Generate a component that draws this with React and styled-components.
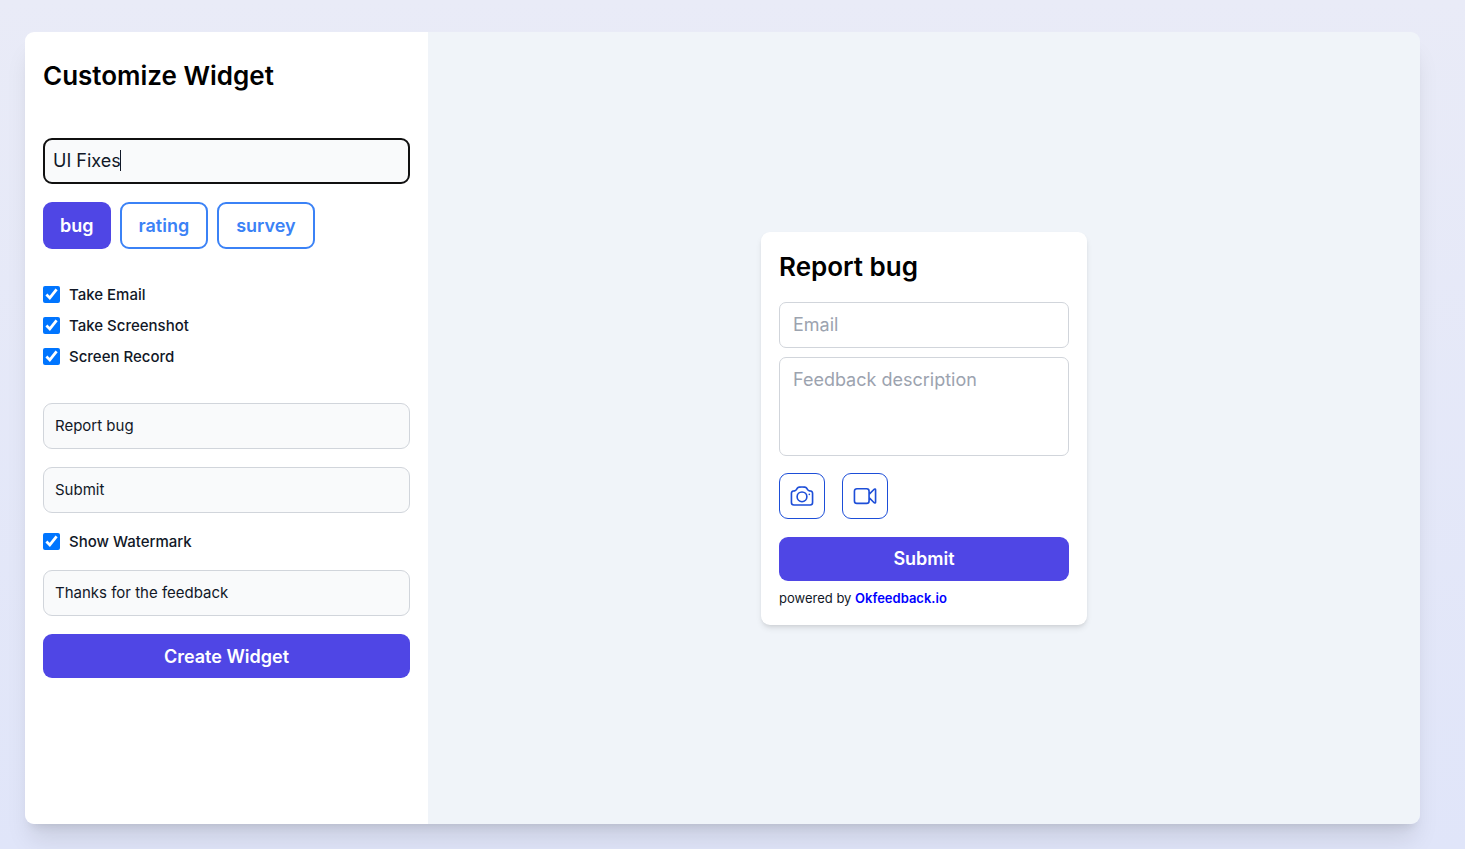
import { useLayoutEffect, useRef, useState } from "react";
import styled, { createGlobalStyle } from "styled-components";
import { HiOutlineCamera, HiOutlineVideoCamera } from "react-icons/hi2";

const widgetTypes = ["bug", "rating", "survey"];

export default function App() {
  const [name, setName] = useState("UI Fixes");
  const [type, setType] = useState("bug");
  const [title, setTitle] = useState("Report bug");
  const [submitText, setSubmitText] = useState("Submit");
  const [thanksText, setThanksText] = useState("Thanks for the feedback");
  const [takeEmail, setTakeEmail] = useState(true);
  const [takeScreenshot, setTakeScreenshot] = useState(true);
  const [screenRecord, setScreenRecord] = useState(true);
  const [watermark, setWatermark] = useState(true);

  return (
    <Page>
      <GlobalStyle />
      <Builder>
        <Sidebar>
          <PageTitle>Customize Widget</PageTitle>
          <NameField value={name} onChange={setName} />
          <TypeList>
            {widgetTypes.map((item) => (
              <TypeButton
                key={item}
                type="button"
                $active={item === type}
                onClick={() => setType(item)}
              >
                {item}
              </TypeButton>
            ))}
          </TypeList>
          <Options>
            <Check label="Take Email" checked={takeEmail} onChange={setTakeEmail} />
            <Check
              label="Take Screenshot"
              checked={takeScreenshot}
              onChange={setTakeScreenshot}
            />
            <Check
              label="Screen Record"
              checked={screenRecord}
              onChange={setScreenRecord}
            />
          </Options>
          <TextInput
            aria-label="Widget title"
            value={title}
            onChange={(e) => setTitle(e.target.value)}
          />
          <TextInput
            aria-label="Submit button text"
            value={submitText}
            onChange={(e) => setSubmitText(e.target.value)}
          />
          <Check label="Show Watermark" checked={watermark} onChange={setWatermark} />
          <TextInput
            aria-label="Thank you message"
            value={thanksText}
            onChange={(e) => setThanksText(e.target.value)}
          />
          <PrimaryButton type="button">Create Widget</PrimaryButton>
        </Sidebar>

        <Preview>
          <Widget>
            <WidgetTitle>{title}</WidgetTitle>
            {takeEmail && (
              <EmailInput type="email" aria-label="Email" placeholder="Email" />
            )}
            <Description
              aria-label="Feedback description"
              placeholder="Feedback description"
            />
            <Actions>
              {takeScreenshot && (
                <IconButton type="button" aria-label="Take screenshot">
                  <HiOutlineCamera />
                </IconButton>
              )}
              {screenRecord && (
                <IconButton type="button" aria-label="Record screen">
                  <HiOutlineVideoCamera />
                </IconButton>
              )}
            </Actions>
            <PrimaryButton type="button">{submitText}</PrimaryButton>
            {watermark && (
              <Watermark>
                powered by <a href="#okfeedback">Okfeedback.io</a>
              </Watermark>
            )}
          </Widget>
        </Preview>
      </Builder>
    </Page>
  );
}

function NameField({ value, onChange }) {
  const inputRef = useRef(null);
  const [caretLeft, setCaretLeft] = useState(0);
  const [caretIndex, setCaretIndex] = useState(value.length);

  // the caret sits after the text before the selection
  useLayoutEffect(() => {
    const style = getComputedStyle(inputRef.current);
    const context = document.createElement("canvas").getContext("2d");
    context.font = `${style.fontSize} ${style.fontFamily}`;
    const textWidth = context.measureText(value.slice(0, caretIndex)).width;
    setCaretLeft(Math.floor(10 + textWidth));
  }, [value, caretIndex]);

  return (
    <NameWrapper>
      <NameInput
        ref={inputRef}
        aria-label="Widget name"
        autoFocus
        value={value}
        onChange={(e) => {
          onChange(e.target.value);
          setCaretIndex(e.target.selectionStart);
        }}
        onSelect={(e) => setCaretIndex(e.target.selectionStart)}
      />
      <Caret style={{ left: caretLeft }} />
    </NameWrapper>
  );
}

function Check({ label, checked, onChange }) {
  return (
    <CheckLabel>
      <input
        type="checkbox"
        checked={checked}
        onChange={(e) => onChange(e.target.checked)}
      />
      {label}
    </CheckLabel>
  );
}

const GlobalStyle = createGlobalStyle`
  * {
    box-sizing: border-box;
  }

  body {
    margin: 0;
    color: #111827;
    font-family: Inter, "Liberation Sans", sans-serif;
  }

  button,
  input,
  textarea {
    margin: 0;
    font-family: inherit;
  }

  button {
    cursor: pointer;
  }
`;

const Page = styled.div`
  min-height: 100vh;
  padding: 32px 45px 25px 25px;
  display: flex;
  background: linear-gradient(#e9ebf7, #e0e5f9);
`;

const Builder = styled.main`
  flex: 1;
  display: flex;
  border-radius: 9px;
  box-shadow: 0 20px 25px -5px rgba(0, 0, 0, 0.1),
    0 8px 10px -6px rgba(0, 0, 0, 0.1);
`;

const Sidebar = styled.section`
  width: 403px;
  flex-shrink: 0;
  padding: 26px 18px 18px;
  display: flex;
  flex-direction: column;
  gap: 18px;
  background-color: #fff;
  border-radius: 9px 0 0 9px;
`;

const PageTitle = styled.h1`
  margin: 0 0 26px;
  color: #000;
  font-size: 26px;
  font-weight: 600;
  line-height: 36px;
`;

const TextInput = styled.input`
  width: 100%;
  height: 46px;
  padding: 0 11px 2px;
  color: #111827;
  background-color: #f9fafb;
  border: 1px solid #d1d5db;
  border-radius: 9px;
  font-size: 15px;
`;

const NameWrapper = styled.div`
  position: relative;
  display: flex;
`;

const Caret = styled.span`
  display: none;
  position: absolute;
  top: 12px;
  width: 1px;
  height: 21px;
  background-color: #111827;
  pointer-events: none;
`;

const NameInput = styled(TextInput)`
  padding: 0 9px 2px;
  font-size: 18px;
  caret-color: transparent;

  &:focus {
    padding: 0 8px 2px;
    border: 2px solid #101010;
    outline: none;
  }

  &:focus + ${Caret} {
    display: block;
  }
`;

const TypeList = styled.div`
  display: flex;
  gap: 9px;
`;

const TypeButton = styled.button`
  height: 47px;
  padding: 0 17px;
  color: ${({ $active }) => ($active ? "#fff" : "#3b82f6")};
  background-color: ${({ $active }) => ($active ? "#4f46e5" : "#fff")};
  border: ${({ $active }) => ($active ? "none" : "2px solid #3b82f6")};
  border-radius: 9px;
  font-size: 18px;
  font-weight: 600;
`;

const Options = styled.div`
  margin: 17px 0 18px;
  display: flex;
  flex-direction: column;
  gap: 10px;
`;

const CheckLabel = styled.label`
  display: flex;
  align-items: center;
  gap: 9px;
  font-size: 15px;
  font-weight: 500;
  line-height: 21px;

  input {
    width: 17px;
    height: 17px;
  }
`;

const PrimaryButton = styled.button`
  width: 100%;
  height: 44px;
  color: #fff;
  background-color: #4f46e5;
  border: none;
  border-radius: 9px;
  font-size: 18px;
  font-weight: 600;
`;

const Preview = styled.section`
  flex: 1;
  display: flex;
  align-items: center;
  justify-content: center;
  background-color: #f0f4f9;
  border-radius: 0 9px 9px 0;
`;

const Widget = styled.div`
  width: 326px;
  padding: 18px;
  background-color: #fff;
  border-radius: 9px;
  box-shadow: 0 4px 6px -1px rgba(0, 0, 0, 0.1),
    0 2px 4px -2px rgba(0, 0, 0, 0.1);
`;

const WidgetTitle = styled.h2`
  margin: 0 0 18px;
  color: #000;
  font-size: 26px;
  font-weight: 600;
  line-height: 34px;
`;

const EmailInput = styled.input`
  display: block;
  width: 100%;
  height: 46px;
  margin-bottom: 9px;
  padding: 0 13px;
  border: 1px solid #d1d5db;
  border-radius: 7px;
  font-size: 18px;

  &::placeholder {
    color: #9ca3af;
  }
`;

const Description = styled.textarea`
  display: block;
  width: 100%;
  height: 99px;
  padding: 9px 13px;
  border: 1px solid #d1d5db;
  border-radius: 7px;
  font-size: 18px;
  line-height: 26px;
  resize: none;

  &::placeholder {
    color: #9ca3af;
  }
`;

const Actions = styled.div`
  margin: 17px 0 18px;
  display: flex;
  gap: 17px;
`;

const IconButton = styled.button`
  width: 46px;
  height: 46px;
  padding: 0;
  display: flex;
  align-items: center;
  justify-content: center;
  color: #1d4ed8;
  background-color: #fff;
  border: 1px solid #1d4ed8;
  border-radius: 9px;

  svg {
    width: 26px;
    height: 26px;
  }
`;

const Watermark = styled.p`
  margin: 9px 0 0;
  font-size: 13px;
  line-height: 17px;

  a {
    color: #00f;
    font-weight: 600;
    text-decoration: none;
  }
`;
